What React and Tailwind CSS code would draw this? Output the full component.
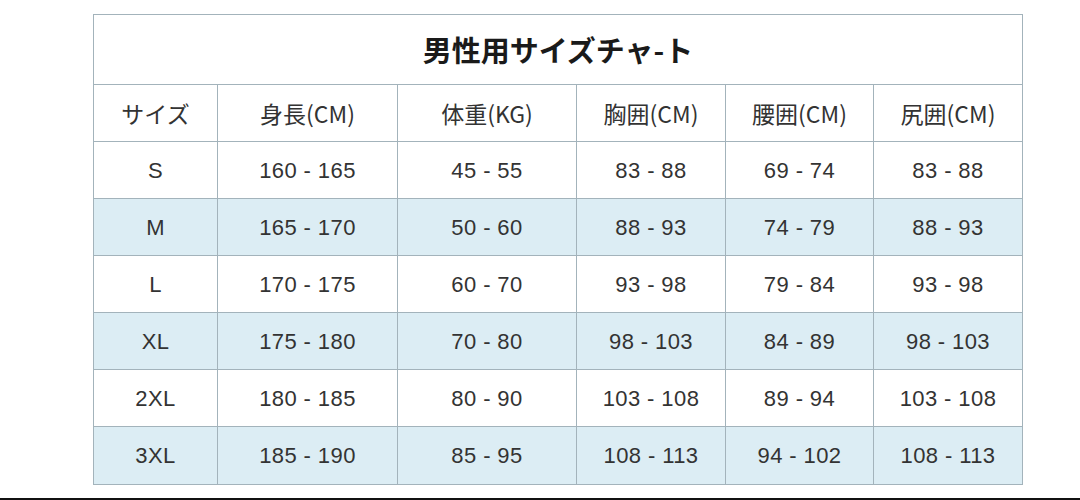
const cols = ["w-[124px]", "w-[180px]", "w-[179px]", "w-[149px]", "w-[148px]", "w-[148px]"];

const headers = ["サイズ", "身長(CM)", "体重(KG)", "胸囲(CM)", "腰囲(CM)", "尻囲(CM)"];

const rows = [
  ["S", "160 - 165", "45 - 55", "83 - 88", "69 - 74", "83 - 88"],
  ["M", "165 - 170", "50 - 60", "88 - 93", "74 - 79", "88 - 93"],
  ["L", "170 - 175", "60 - 70", "93 - 98", "79 - 84", "93 - 98"],
  ["XL", "175 - 180", "70 - 80", "98 - 103", "84 - 89", "98 - 103"],
  ["2XL", "180 - 185", "80 - 90", "103 - 108", "89 - 94", "103 - 108"],
  ["3XL", "185 - 190", "85 - 95", "108 - 113", "94 - 102", "108 - 113"],
];

export default function App() {
  return (
    <div className="w-[1080px] h-[500px] bg-white flex flex-col font-['Liberation_Sans','Noto_Sans_CJK_JP',sans-serif] text-[#333]">
      <div className="flex-1 pt-[14px] pl-[93px]">
        <div className="w-[930px] border border-[#a3b3bb]">
          <div className="h-[70px] flex items-center justify-center font-bold text-[29px] text-[#1a1a1a] border-b border-[#a3b3bb] font-['Noto_Sans_CJK_JP',sans-serif]">
            男性用サイズチャ-ト
          </div>
          <div className="flex h-[57px] border-b border-[#a3b3bb]">
            {headers.map((h, i) => (
              <div
                key={h}
                className={`${cols[i]} flex items-center justify-center text-[23px] font-['Noto_Sans_CJK_JP',sans-serif] ${i < 5 ? "border-r border-[#a3b3bb]" : ""}`}
              >
                {h}
              </div>
            ))}
          </div>
          {rows.map((r, ri) => (
            <div
              key={r[0]}
              className={`flex h-[57px] ${ri % 2 === 1 ? "bg-[#dcedf4]" : "bg-white"} ${ri < 5 ? "border-b border-[#a3b3bb]" : ""}`}
            >
              {r.map((c, i) => (
                <div
                  key={i}
                  className={`${cols[i]} flex items-center justify-center text-[22px] tracking-[0.4px] whitespace-pre ${i < 5 ? "border-r border-[#a3b3bb]" : ""}`}
                >
                  {c}
                </div>
              ))}
            </div>
          ))}
        </div>
      </div>
      <div className="h-[2px] bg-[#111]" />
    </div>
  );
}
